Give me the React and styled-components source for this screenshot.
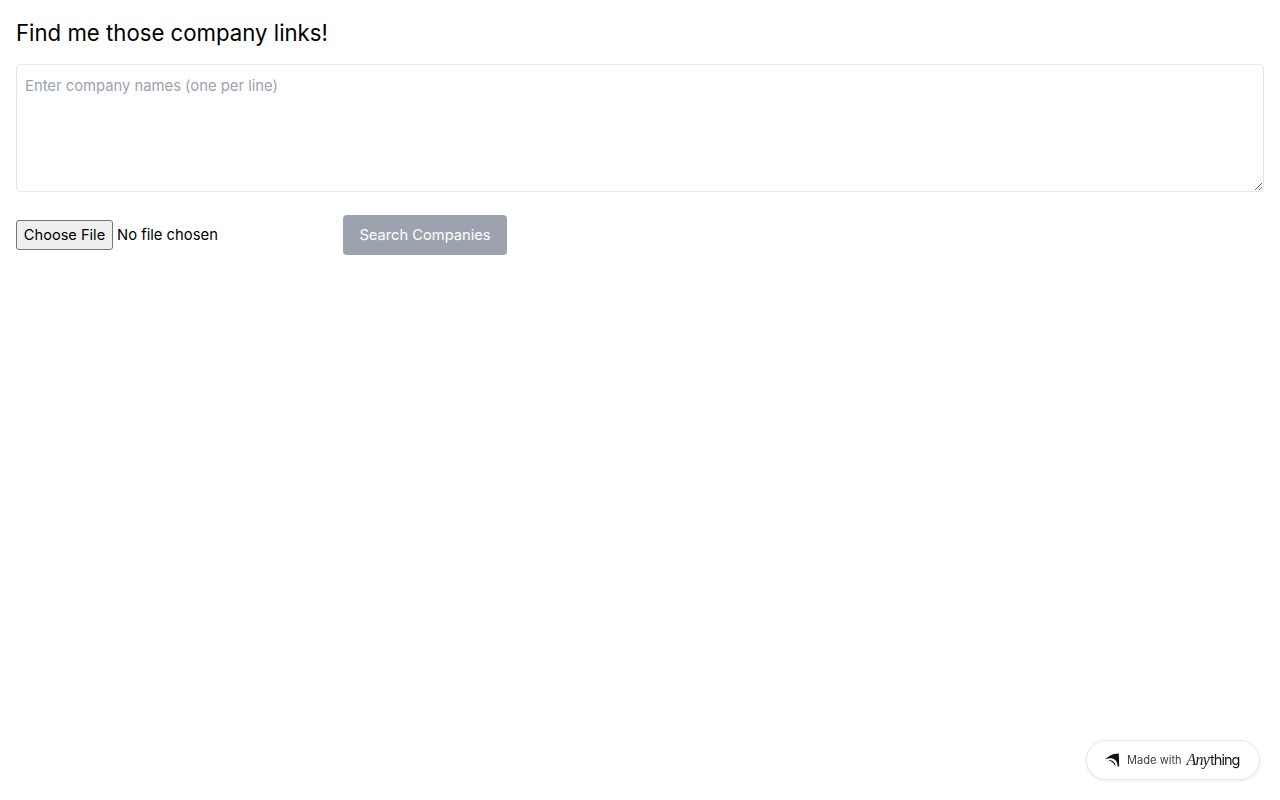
import React from "react";
import styled, { createGlobalStyle } from "styled-components";

const Global = createGlobalStyle`
  * { box-sizing: border-box; }
  html, body { margin: 0; padding: 0; background: #fff; }
  body { font-family: Inter, "Liberation Sans", sans-serif; color: #000; }
`;

const Page = styled.main`
  display: flex;
  flex-direction: column;
  min-height: 800px;
  padding: 16px;
`;

const Title = styled.h1`
  margin: 0 0 14px;
  font-size: 22.2px;
  line-height: 34px;
  font-weight: 400;
`;

const Names = styled.textarea`
  display: block;
  width: 100%;
  height: 128px;
  padding: 9px 8px 8px;
  border: 1px solid #e5e7eb;
  border-radius: 4px;
  outline: none;
  font: 14.8px/24px Inter, "Liberation Sans", sans-serif;
  &::placeholder { color: #9ca3af; opacity: 1; }
`;

const Actions = styled.div`
  display: flex;
  align-items: center;
  margin-top: 23px;
  gap: 16px;
`;

const FileInput = styled.input`
  width: 311px;
  height: 30px;
  font: 14.8px Inter, "Liberation Sans", sans-serif;
  &::file-selector-button {
    width: 97px;
    height: 30px;
    margin-right: 4px;
    padding: 0;
    border: 1px solid #767676;
    border-radius: 3px;
    background: #efefef;
    color: #000;
    font: 14.6px Inter, "Liberation Sans", sans-serif;
  }
`;

const SearchButton = styled.button`
  width: 164px;
  height: 40px;
  padding: 0;
  border: 0;
  border-radius: 4px;
  background: #9ca3af;
  color: #fff;
  font: 14.7px/24px Inter, "Liberation Sans", sans-serif;
`;

const Badge = styled.a`
  position: fixed;
  right: 20px;
  bottom: 20px;
  display: flex;
  align-items: center;
  width: 174px;
  height: 40px;
  padding-left: 18px;
  border: 1px solid #e5e7eb;
  border-radius: 20px;
  background: #fff;
  box-shadow: 0 1px 3px rgba(0, 0, 0, 0.08);
  color: #3f3f46;
  font-size: 11.1px;
`;

const BadgeMark = styled.svg`
  width: 15px;
  height: 14px;
  margin-right: 7px;
  flex: none;
`;

const Brand = styled.span`
  display: inline-flex;
  align-items: baseline;
  margin-left: 5px;
  color: #18181b;
  font-size: 14.5px;
  letter-spacing: -1px;
`;

const BrandAny = styled.span`
  font-family: "Liberation Serif", serif;
  font-style: italic;
  font-size: 16px;
  letter-spacing: -0.8px;
  margin-right: 1px;
`;

export default function App() {
  return (
    <>
      <Global />
      <Page>
        <Title>Find me those company links!</Title>
        <Names placeholder="Enter company names (one per line)" />
        <Actions>
          <FileInput type="file" />
          <SearchButton disabled>Search Companies</SearchButton>
        </Actions>
      </Page>
      <Badge>
        <BadgeMark viewBox="0 0 15 14">
          <path d="M0.4 6.4 C3 3 7.5 0.6 13.8 0.4 L14.2 13.6 L12.7 13.6 C12.6 9.6 11 6.2 6.6 5.2 C4.6 5 2.4 5.4 0.4 6.4 Z" fill="#111" />
          <path d="M3.2 7 C6.6 6.6 10 8.8 10.8 12.6 L10 12.6 C8.8 10 6.4 8 3.2 7 Z" fill="#111" />
        </BadgeMark>
        Made with
        <Brand>
          <BrandAny>Any</BrandAny>thing
        </Brand>
      </Badge>
    </>
  );
}
